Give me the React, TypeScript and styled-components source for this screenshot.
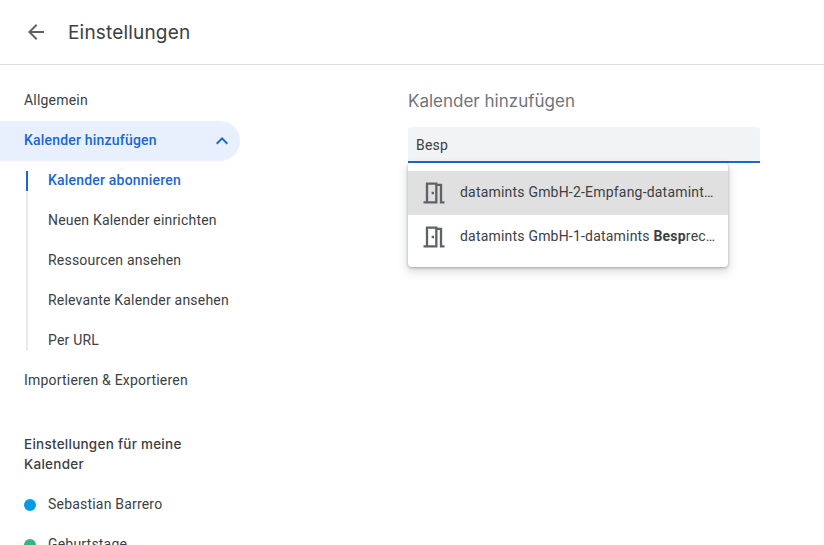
import React from "react";
import styled, { createGlobalStyle, css } from "styled-components";

const GlobalStyle = createGlobalStyle`
  *, *::before, *::after { box-sizing: border-box; }
  body {
    margin: 0;
    background: #fff;
    color: #3c4043;
    font: 400 14px/20px Roboto, sans-serif;
    letter-spacing: 0.2px;
    overflow: hidden;
  }
`;

const Page = styled.div`
  height: 545px;
  overflow: hidden;
  display: flex;
  flex-direction: column;
`;

const Header = styled.header`
  flex: none;
  height: 65px;
  display: flex;
  align-items: center;
  gap: 20px;
  padding-left: 24px;
  border-bottom: 1px solid #dadce0;
`;

const BackButton = styled.button`
  display: flex;
  padding: 0;
  border: 0;
  background: none;
  color: #5f6368;
`;

const Title = styled.h1`
  margin: 0;
  padding-top: 2px;
  font: 400 19px/28px Inter, sans-serif;
  letter-spacing: 0.18px;
`;

const Body = styled.div`
  display: flex;
  flex: 1;
  min-height: 0;
`;

const Sidebar = styled.nav`
  flex: none;
  width: 408px;
  padding-top: 16px;
`;

const NavItem = styled.div<{ $active?: boolean }>`
  width: 240px;
  height: 40px;
  display: flex;
  align-items: center;
  justify-content: space-between;
  padding: 0 10px 2px 24px;
  ${(p) =>
    p.$active &&
    css`
      background: #e8f0fe;
      color: #1967d2;
      font-weight: 500;
      border-radius: 0 20px 20px 0;
    `}
`;

const SubList = styled.div`
  margin-left: 26px;
`;

const SubItem = styled.div<{ $active?: boolean; $last?: boolean }>`
  height: 40px;
  display: flex;
  align-items: center;
  padding-bottom: 2px;
  color: ${(p) => (p.$active ? "#1967d2" : "inherit")};
  font-weight: ${(p) => (p.$active ? 500 : 400)};

  &::before {
    content: "";
    width: 2px;
    height: ${(p) => (p.$active ? 20 : p.$last ? 30 : 40)}px;
    margin-right: 20px;
    margin-top: ${(p) => (p.$active ? 2 : 0)}px;
    align-self: ${(p) => (p.$active ? "center" : "flex-start")};
    background: ${(p) => (p.$active ? "#1967d2" : "#e8eaed")};
  }
`;

const Rail = styled(SubItem)`
  &::before {
    height: 50px;
    margin-top: -10px;
  }
`;

const SectionTitle = styled.h2`
  margin: 33px 0 11px 24px;
  width: 180px;
  font: 500 13.5px/20px Inter, sans-serif;
  letter-spacing: 0.25px;
`;

const CalendarItem = styled.div`
  height: 40px;
  display: flex;
  align-items: center;
  gap: 12px;
  padding: 0 0 2px 24px;
`;

const Dot = styled.span<{ $color: string }>`
  width: 12px;
  height: 12px;
  margin-top: 2px;
  border-radius: 50%;
  background: ${(p) => p.$color};
`;

const Main = styled.main`
  width: 352px;
  padding-top: 24px;
`;

const MainTitle = styled.h2`
  margin: 0;
  height: 38px;
  color: #70757a;
  font: 400 17px/24px Inter, sans-serif;
  letter-spacing: 0;
`;

const Field = styled.div`
  position: relative;
`;

const Input = styled.div`
  height: 36px;
  padding: 8px;
  background: #f1f3f4;
  border-bottom: 2px solid #1967d2;
  border-radius: 4px 4px 0 0;
`;

const Menu = styled.div`
  position: absolute;
  top: 36px;
  left: 0;
  width: 320px;
  height: 104px;
  padding: 8px 0;
  background: #fff;
  border-radius: 4px;
  box-shadow: 0 1px 3px rgba(60, 64, 67, 0.4), 0 4px 9px 2px rgba(60, 64, 67, 0.15);
`;

const Option = styled.div<{ $selected?: boolean }>`
  height: 44px;
  display: flex;
  align-items: center;
  gap: 12px;
  padding: 0 12px;
  background: ${(p) => (p.$selected ? "#e0e0e0" : "transparent")};
`;

const OptionText = styled.span`
  flex: 1;
  padding-bottom: 2px;
  white-space: nowrap;
  b { font-weight: 700; }
`;

const Icon = styled.svg`
  flex: none;
  fill: currentColor;
  color: #5f6368;
`;

const Chevron = styled(Icon)`
  color: #1967d2;
  margin-top: 2px;
`;

const DoorIcon = () => (
  <Icon width="28" height="28" viewBox="0 0 24 24">
    <path d="M19 19V4h-4V3H5v16H3v2h12V6h2v15h4v-2h-2zm-6 0H7V5h6v14zm-3-8h2v2h-2z" />
  </Icon>
);

export default function App() {
  return (
    <>
      <GlobalStyle />
      <Page>
        <Header>
          <BackButton aria-label="Zurück">
            <Icon width="24" height="24" viewBox="0 0 24 24">
              <path d="M20 11H7.83l5.59-5.59L12 4l-8 8 8 8 1.41-1.41L7.83 13H20v-2z" />
            </Icon>
          </BackButton>
          <Title>Einstellungen</Title>
        </Header>
        <Body>
          <Sidebar>
            <NavItem>Allgemein</NavItem>
            <NavItem $active>
              Kalender hinzufügen
              <Chevron width="16" height="16" viewBox="4 4 16 16">
                <path d="M12 8l-6 6 1.41 1.41L12 10.83l4.59 4.58L18 14z" />
              </Chevron>
            </NavItem>
            <SubList>
              <SubItem $active>Kalender abonnieren</SubItem>
              <Rail>Neuen Kalender einrichten</Rail>
              <SubItem>Ressourcen ansehen</SubItem>
              <SubItem>Relevante Kalender ansehen</SubItem>
              <SubItem $last>Per URL</SubItem>
            </SubList>
            <NavItem>Importieren &amp; Exportieren</NavItem>
            <SectionTitle>Einstellungen für meine Kalender</SectionTitle>
            <CalendarItem><Dot $color="#039be5" />Sebastian Barrero</CalendarItem>
            <CalendarItem><Dot $color="#33b679" />Geburtstage</CalendarItem>
          </Sidebar>
          <Main>
            <MainTitle>Kalender hinzufügen</MainTitle>
            <Field>
              <Input>Besp</Input>
              <Menu>
                <Option $selected>
                  <DoorIcon />
                  <OptionText>datamints GmbH-2-Empfang-datamint…</OptionText>
                </Option>
                <Option>
                  <DoorIcon />
                  <OptionText>datamints GmbH-1-datamints <b>Besp</b>rec…</OptionText>
                </Option>
              </Menu>
            </Field>
          </Main>
        </Body>
      </Page>
    </>
  );
}
